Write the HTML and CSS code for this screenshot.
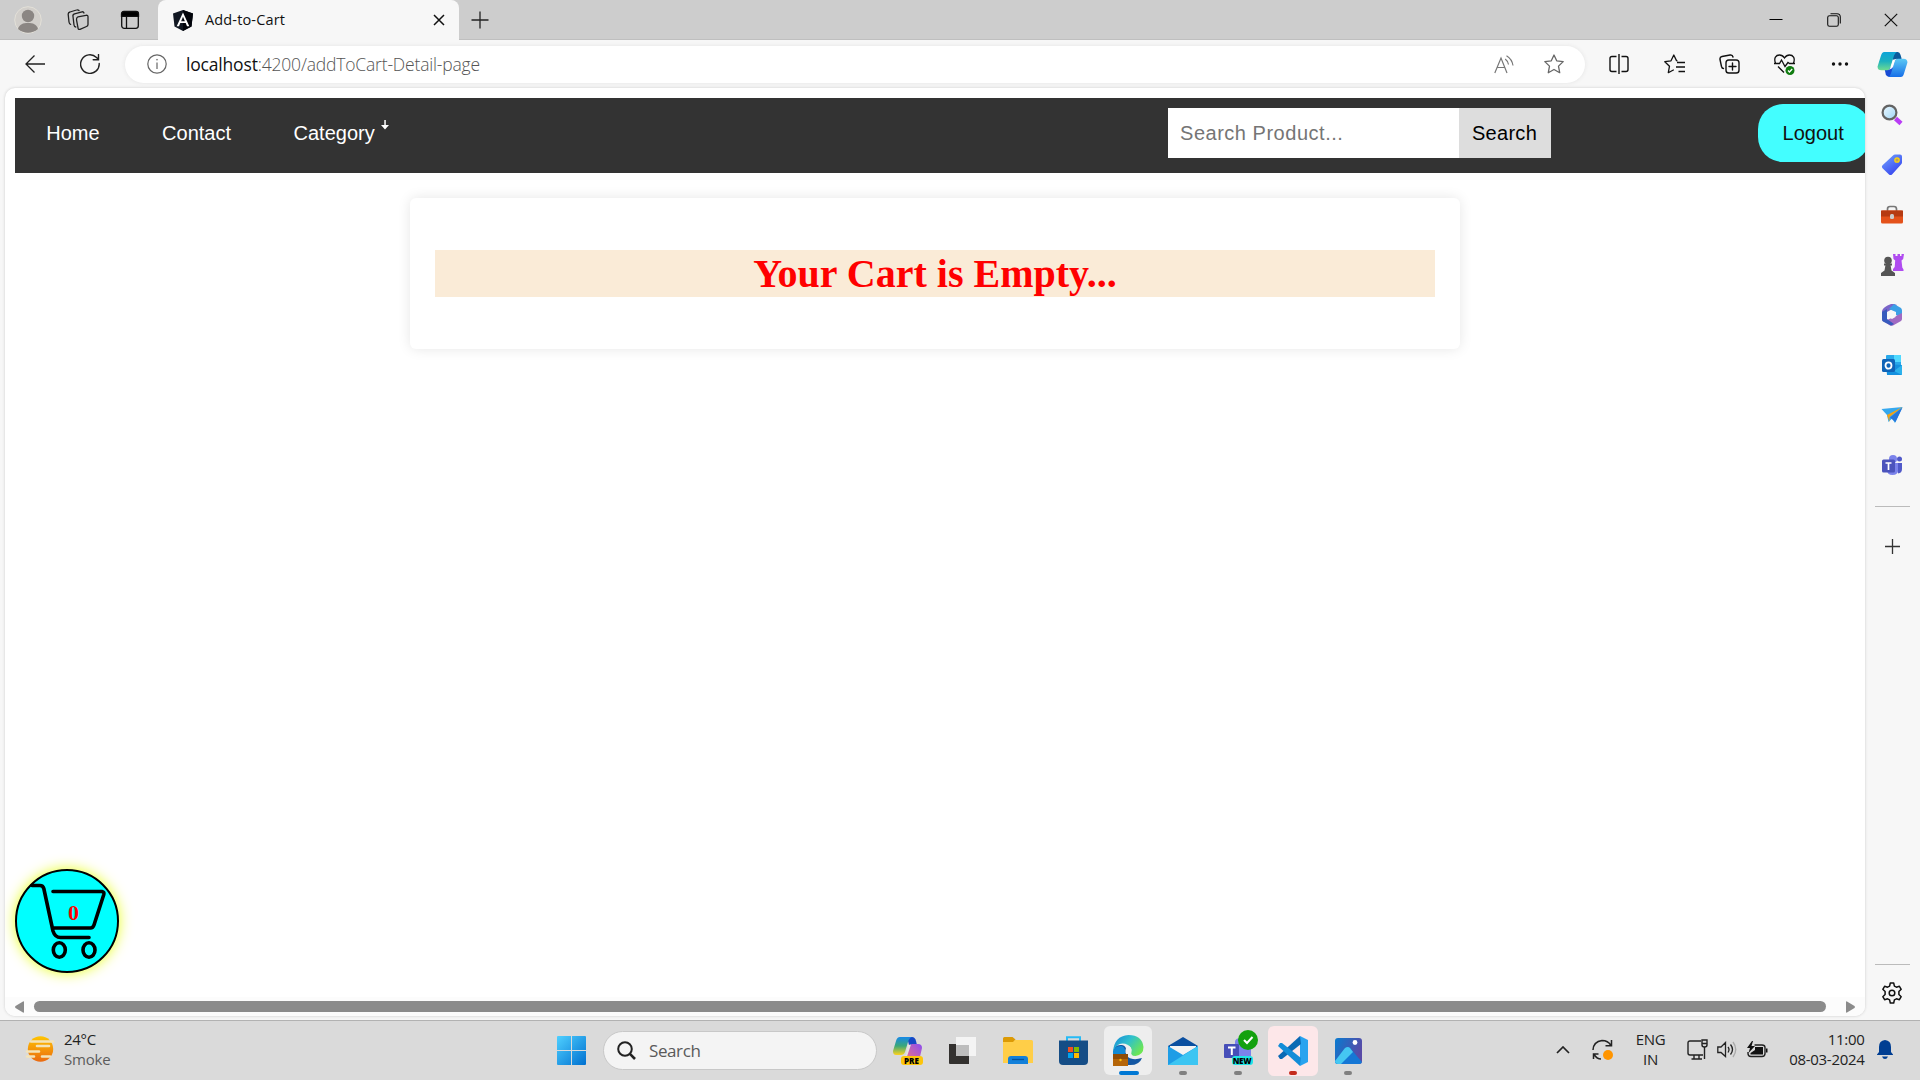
FILE: index.html
```html
<!DOCTYPE html>
<html lang="en">
<head>
<meta charset="utf-8">
<title>Add-to-Cart</title>
<link rel="stylesheet" href="styles.css">
</head>
<body>
<div class="screen">
  <header class="tabbar">
    <div class="slot w56">
      <svg width="28" height="28" viewBox="0 0 28 28"><circle cx="14" cy="14" r="13.3" fill="#d2cfcb" stroke="#e3e0d8" stroke-width="1"/><circle cx="14" cy="10" r="6.2" fill="#8b8683"/><path d="M4 23c1.500-5 5-6 10-6s8.500 1 10 6c-6 5-14 5-20 0z" fill="#8b8683"/></svg>
    </div>
    <div class="slot w44">
      <svg width="22" height="22" viewBox="0 0 22 22" fill="none" stroke="#222" stroke-width="1.300" stroke-linejoin="round" stroke-linecap="round"><path d="M11 7.800 19 6.300q2-.3 2 1.500v7.700q0 1.500-1.500 2L13 20.300q-2 .5-2-1.500l-1.500-8q-.3-2 1.500-3z"/><path d="M17 4q-.5-1.500-2-1.200L7.500 4.800Q5.500 5.500 6 7.500l1 8.500q.3 2 1.800 2"/><path d="M12 1.500Q11 .5 9.500 1L3 3Q1 3.500 1.200 5.500l.8 7.500q.3 2 1.600 2.300"/></svg>
    </div>
    <div class="slot w58 actions">
      <svg width="20" height="20" viewBox="0 0 20 20" fill="none" stroke="#111" stroke-width="1.300"><rect x="1.700" y="1.700" width="16.600" height="16.600" rx="2.500"/><path d="M6.500 6v12"/><path d="M1.500 6.300V4q0-2.500 2.500-2.500h12q2.500 0 2.500 2.500v2.300z" fill="#000"/></svg>
    </div>
    <div class="tab">
      <svg width="20" height="21" viewBox="0 0 20 21"><path d="M10 0 20 3.500 18.500 16.500 10 21 1.500 16.500 0 3.500z" fill="#111722"/><path d="M10 0 20 3.500 18.500 16.500 10 21z" fill="#02040b"/><path d="M10 2.500 3.700 16.200H6l1.300-3.100h5.400l1.300 3.100h2.300zm0 4.300 1.900 4.500H8.100z" fill="#fff"/></svg>
      <span class="tab-title">Add-to-Cart</span>
      <svg class="push" width="12" height="12" viewBox="0 0 12 12" stroke="#111" stroke-width="1.500"><path d="M1 1 11 11M11 1 1 11"/></svg>
    </div>
    <div class="slot w42">
      <svg width="18" height="18" viewBox="0 0 18 18" stroke="#222" stroke-width="1.300"><path d="M9 .5v17M.5 9h17"/></svg>
    </div>
    <div class="window-buttons">
      <svg width="14" height="14" viewBox="0 0 14 14" stroke="#000"><path d="M.5 6.500h13"/></svg>
      <svg width="14" height="14" viewBox="0 0 14 14" fill="none" stroke="#111" stroke-width="1.100"><rect x=".7" y="2.700" width="10.600" height="10.600" rx="1.800"/><path d="M3.500.7H10q3.300 0 3.300 3.300v6.500"/></svg>
      <svg width="14" height="14" viewBox="0 0 14 14" stroke="#111" stroke-width="1.200"><path d="M.8.8 13.200 13.200M13.200.8.8 13.200"/></svg>
    </div>
  </header>

  <div class="toolbar">
    <div class="slot back">
      <svg width="20" height="18" viewBox="0 0 20 18" fill="none" stroke="#222" stroke-width="1.300"><path d="M20 9H1M9.500.5 1 9l8.500 8.500"/></svg>
    </div>
    <div class="slot reload">
      <svg width="20" height="20" viewBox="0 0 20 20" fill="none" stroke="#222" stroke-width="1.400" stroke-linecap="round"><path d="M19.200 9.500A9.300 9.300 0 1 1 16.500 3.500l1.800 1.800M18.500.5v5.300h-5.300"/></svg>
    </div>
    <div class="address">
      <svg width="20" height="20" viewBox="0 0 20 20" fill="none" stroke="#666" stroke-width="1.200"><circle cx="10" cy="10" r="9.200"/><path d="M10 8.500v6.500"/><circle cx="10" cy="5.700" r=".5" fill="#666" stroke-width=".6"/></svg>
      <span class="url"><b>localhost</b>:4200/addToCart-Detail-page</span>
      <svg class="push" width="20" height="19" viewBox="0 0 20 19" fill="none" stroke="#777" stroke-width="1.200"><path d="M.8 18 7 3l6 15M3.300 12.500h7.500M11.200 4q2.700 2 3.300 5.500M12.500.7Q18 4 19 10.500"/></svg>
      <svg class="star" width="20" height="20" viewBox="0 0 20 20" fill="none" stroke="#666" stroke-width="1.300" stroke-linejoin="round"><path d="m10 1 2.700 5.800 6.500.8-4.700 4.500 1.200 6.600L10 15.500l-5.700 3.200 1.200-6.600L.8 7.600l6.500-.8z"/></svg>
    </div>
    <div class="tools">
      <svg width="20" height="20" viewBox="0 0 20 20" fill="none" stroke="#111" stroke-width="1.400"><path d="M10 0v20M7.500 2.500H3Q1 2.500 1 4.500v11q0 2 2 2h4.500M12.500 2.500H17q2 0 2 2v11q0 2-2 2h-4.500"/></svg>
      <svg width="21" height="20" viewBox="0 0 21 20" fill="none" stroke="#111" stroke-width="1.300" stroke-linejoin="round"><path d="M13.500 6.800 12.500 6.600 9.800 1 7 6.800l-6.200.9 4.700 4.500-1.200 6.500 5.500-3M13 8.500h8M12 13h9M14.500 17.500H21"/></svg>
      <svg width="21" height="20" viewBox="0 0 21 20" fill="none" stroke="#111" stroke-width="1.400" stroke-linecap="round"><rect x="7" y="6" width="13" height="13" rx="2.800"/><path d="M13.500 9v7M10 12.500h7M14 3Q13.500.6 11 1L3 2.500Q.6 3 1 5.500l1.500 7Q3 14.500 4.500 14.500"/></svg>
      <svg width="21" height="21" viewBox="0 0 21 21" fill="none" stroke="#111" stroke-width="1.300"><path d="M1.500 9C-.5 4 2 1 5.500 1 8 1 9.500 2.500 10.500 4 11.500 2.500 13 1 15.500 1 19 1 21.500 4 19.500 9M0 9.500h5.500L7.500 6l3.500 6.500L14 8.500l1.500 1H21M4 12.500l6 6"/><circle cx="16" cy="16.500" r="4.500" fill="#107c10" stroke="none"/><path d="m14 16.500 1.500 1.500 2.700-3" stroke="#fff"/></svg>
      <svg width="18" height="6" viewBox="0 0 18 6" fill="#111"><circle cx="2.500" cy="3" r="1.700"/><circle cx="9" cy="3" r="1.700"/><circle cx="15.500" cy="3" r="1.700"/></svg>
    </div>
    <div class="slot copilot">
      <svg width="31" height="27" viewBox="0 0 31 28"><defs><linearGradient id="cpA" x1="0" y1="0" x2="0" y2="1"><stop offset="0" stop-color="#0da4d8"/><stop offset=".5" stop-color="#1bb0c0"/><stop offset="1" stop-color="#6fdc91"/></linearGradient><linearGradient id="cpB" x1="0" y1="0" x2="0" y2="1"><stop offset="0" stop-color="#5cc9f5"/><stop offset="1" stop-color="#176fe8"/></linearGradient></defs><path d="M15 1h6q2 0 2.800 3l1.200 4-9 3z" fill="#0a5a9c"/><path d="M7 17h10l-2 10h-3q-2.500 0-3.500-3z" fill="#184bd4"/><path d="M7 1h13q-2 1-3 4l-4 13q-1 2-3 2H4q-4 0-4-4L3.500 5Q4.500 1 7 1z" fill="url(#cpA)"/><path d="M24 27H11q2-1 3-4l4-13q1-2 3-2h6q4 0 4 4l-3.500 11q-1 4-3.500 4z" fill="url(#cpB)"/><path d="m16 9 4-1q-2 1-3 4l-2 6-4 2q2-1 3-4z" fill="#fff"/></svg>
    </div>
  </div>

  <div class="workspace">
    <main class="page">
      <nav class="nav">
        <a>Home</a><a>Contact</a><a>Category <svg class="caret" width="8" height="10" viewBox="0 0 8 10"><path d="M3.300 0h1.500v5H8L4 9.500 0 5h3.300z" fill="#fff"/></svg></a>
        <form class="search"><div class="field">Search Product...</div><div class="submit">Search</div></form>
        <div class="logout">Logout</div>
      </nav>
      <section class="card"><h1>Your Cart is Empty...</h1></section>
      <div class="cart">
        <svg width="100" height="100" viewBox="0 0 100 100" fill="none" stroke="#000" stroke-width="3.600" stroke-linecap="round" stroke-linejoin="round"><path d="M15 14.500h8q3 0 3.800 3L36 60q2 6.500 7.500 6.500H72"/><path d="M36 20.500h49q2.500.5 1.800 3L77 54q-1 3-3.500 3H37"/><ellipse cx="42.300" cy="79" rx="6" ry="7.200"/><ellipse cx="72" cy="79" rx="6" ry="7.200"/></svg>
        <span class="count">0</span>
      </div>
      <div class="hscroll">
        <svg width="9" height="12" viewBox="0 0 9 12"><path d="M8 .5Q9 0 9 1v10q0 1-1 .5L.5 7Q-.3 6 .5 5z" fill="#8b8b8b"/></svg>
        <div class="thumb"></div>
        <svg width="9" height="12" viewBox="0 0 9 12"><path d="M1 .5Q0 0 0 1v10q0 1 1 .5L8.500 7q.8-1 0-2z" fill="#8b8b8b"/></svg>
      </div>
    </main>
    <aside class="sidebar">
      <div class="side-slot"><svg width="22" height="22" viewBox="0 0 22 22"><defs><linearGradient id="ln" x1="0" y1="0" x2="1" y2="1"><stop offset="0" stop-color="#edf8ff"/><stop offset="1" stop-color="#9dd5f5"/></linearGradient></defs><path d="m14.500 14.500 5.500 5" stroke="#b93df5" stroke-width="4.500"/><circle cx="8.500" cy="8.500" r="6.900" fill="url(#ln)" stroke="#636363" stroke-width="2.200"/></svg></div>
      <div class="side-slot"><svg width="22" height="22" viewBox="0 0 22 22"><defs><linearGradient id="tg" x1="0" y1="0" x2=".7" y2="1"><stop offset="0" stop-color="#74a7ff"/><stop offset="1" stop-color="#3542ee"/></linearGradient></defs><path d="M12 1.500Q13 .5 14 .5h5q2 0 2 2v6q0 1-1 2L11 20.500q-1.500 1.200-3 0L1.300 14q-1-1.500.2-2.700z" fill="url(#tg)"/><circle cx="16" cy="6" r="2.200" fill="#b9a160" stroke="#ffd50a" stroke-width="1.300"/></svg></div>
      <div class="side-slot"><svg width="24" height="20" viewBox="0 0 24 20"><path d="M7.500 6V4q0-2.500 2.500-2.500h4q2.500 0 2.500 2.500v2" fill="none" stroke="#777" stroke-width="1.700"/><rect x="1" y="5.500" width="22" height="13" rx="1.500" fill="#e4521b"/><path d="M1 5.500h22v6H1z" fill="#b63b12"/><rect x="10" y="9" width="4" height="5" rx="1.500" fill="#ccc"/></svg></div>
      <div class="side-slot"><svg width="24" height="24" viewBox="0 0 24 24"><path d="M13 1h2.500v2h2V1h2.500v2h1.500V1H24l-.8 5-1.700 1.500.8 7 1.200 2V18H13v-2l1.700-2 .5-6.500L13.500 6z" fill="#b04cf0"/><g fill="#555"><circle cx="8" cy="7.500" r="3.800"/><path d="M4 10.500h8v2H4z"/><path d="M5.500 12h5l1 5.500 3.500 2.500v3H1v-3l3.500-2.500z"/></g></svg></div>
      <div class="side-slot"><svg width="22" height="24" viewBox="0 0 22 24"><path d="M10 1Q2 4 1 8v8l5 3V9l7-4 3-3-3-1z" fill="#7a65c9"/><path d="m13 1 7 4q1 1 1 2.500V15l-6-3V9L8 6z" fill="#3ba0e6"/><path d="M21 10v6q0 1-1 2l-8 4.500q-1.500.5-3 0L2 18q-1.500-1-1-2l5 1 9-4z" fill="#a06ac3"/><path d="m1 9 5-3v10l7 5-3 1.500-8-4Q1 18 1 16z" fill="#385bbd"/><path d="m11 8.500 3.500 2v3.500L11 16l-3.500-2v-3.500z" fill="#f7f7f7"/></svg></div>
      <div class="side-slot"><svg width="22" height="22" viewBox="0 0 22 22"><rect x="5" y="1" width="15" height="14" rx="1" fill="#28a8ea"/><path d="M13 1h7v7h-7z" fill="#50d9ff"/><path d="M5 10 21 11v9q0 1-1 1H6z" fill="#1490df"/><path d="m21 11-8 6 8 4z" fill="#2cb2ec"/><rect x="1" y="5" width="13" height="13" rx="1.500" fill="#0f64b8"/><ellipse cx="7.500" cy="11.500" rx="3" ry="3.200" fill="none" stroke="#fff" stroke-width="1.800"/></svg></div>
      <div class="side-slot"><svg width="22" height="18" viewBox="0 0 22 18"><path d="M.5 3 21.500 1 14 17 11 12.500 7.500 16 6 9z" fill="#35a8ee"/><path d="m6 9 15.500-8L8.500 11v5z" fill="#f5a312"/><path d="m9 11.500 12.500-10L14.500 16z" fill="#2776dc"/></svg></div>
      <div class="side-slot"><svg width="22" height="22" viewBox="0 0 22 22"><circle cx="12" cy="5" r="4" fill="#7b83eb"/><circle cx="18.500" cy="5" r="2.500" fill="#5059c9"/><path d="M14 9h7v6q0 4-4 4.500z" fill="#5059c9"/><path d="M7 9h10v7q0 5-5.500 5T6 16z" fill="#7b83eb"/><rect x="1" y="5.500" width="13" height="13" rx="1.500" fill="#4b53bc"/><path d="M4.500 9h6M7.500 9v7" stroke="#fff" stroke-width="1.700"/></svg></div>
      <hr>
      <div class="side-slot"><svg width="15" height="15" viewBox="0 0 15 15" stroke="#333" stroke-width="1.300"><path d="M7.500 0v15M0 7.500h15"/></svg></div>
      <hr class="low">
      <div class="side-slot gear"><svg width="22" height="22" viewBox="0 0 22 22" fill="none" stroke="#111" stroke-width="1.500" stroke-linejoin="round"><path d="M9.300 1h3.400l.7 3.100 2 1.100 3-.9 1.800 3-2.300 2.200v3l2.300 2.200-1.800 3-3-.9-2 1.100-.7 3.100H9.300l-.7-3.100-2-1.100-3 .9-1.800-3 2.300-2.200v-3L1.800 7.300l1.800-3 3 .9 2-1.100z"/><circle cx="11" cy="11" r="2.800"/></svg></div>
    </aside>
  </div>

  <footer class="taskbar">
    <div class="weather">
      <svg width="30" height="28" viewBox="0 0 30 28"><defs><linearGradient id="sun" x1="0" y1="0" x2="0" y2="1"><stop offset="0" stop-color="#ffc400"/><stop offset="1" stop-color="#ea6a12"/></linearGradient></defs><circle cx="15.500" cy="14" r="12.700" fill="url(#sun)"/><g stroke="#f3e3b9" stroke-width="2.600" stroke-linecap="round"><path d="M6 6.500h22M12 11h12M2 16.500h12M9 21.500H2M17 21.500h8"/></g></svg>
      <div class="weather-text"><span>24°C</span><span class="dim">Smoke</span></div>
    </div>
    <div class="start">
      <svg width="29" height="29" viewBox="0 0 29 29"><defs><linearGradient id="win" gradientUnits="userSpaceOnUse" x1="0" y1="0" x2="29" y2="29"><stop offset="0" stop-color="#4fd0ff"/><stop offset="1" stop-color="#0070d0"/></linearGradient></defs><path d="M1 0h13v14H0V1q0-1 1-1zM15 0h13q1 0 1 1v13H15zM0 15h14v14H1q-1 0-1-1zM15 15h14v13q0 1-1 1H15z" fill="url(#win)"/></svg>
    </div>
    <div class="finder">
      <svg width="19" height="19" viewBox="0 0 19 19" fill="none" stroke="#222" stroke-width="2"><circle cx="8" cy="8" r="6.800"/><path d="m12.700 12.700 5.300 5.300" stroke-width="2.600"/></svg>
      <span>Search</span>
    </div>
    <div class="apps">
      <div class="app"><svg width="30" height="28" viewBox="0 0 30 28"><defs><linearGradient id="pa" x1="0" y1="0" x2="0" y2="1"><stop offset="0" stop-color="#1688e8"/><stop offset=".5" stop-color="#3ba878"/><stop offset="1" stop-color="#ffd21c"/></linearGradient><linearGradient id="pb" x1="1" y1="0" x2="0" y2="1"><stop offset="0" stop-color="#8d4df0"/><stop offset="1" stop-color="#ff7b70"/></linearGradient></defs><path d="M14 0h5q3 0 4 4l1 4h-8z" fill="#1648c6"/><path d="M7 0h12q-3 1-4 5l-3 10q-1 3-4 3H3q-3 0-3-4L3 4q1-4 4-4z" fill="url(#pa)"/><path d="M19 7h6q4 0 4 4l-3 13q-1 3-4 3H10q2-2 3-5l3-12q1-3 3-3z" fill="url(#pb)"/><path d="m15 8 3-.5-4 12h-3q2-1 2.500-4z" fill="#e6e2e2"/></svg><span class="pre">PRE</span></div>
      <div class="app"><svg width="32" height="28" viewBox="0 0 32 28"><path d="M2 7h20v20H3q-1 0-1-1z" fill="#33312f"/><path d="M9 0h20v19H9z" fill="#f4f4f4"/><path d="M9 8h13v11H9z" fill="#bdbdbd"/></svg></div>
      <div class="app"><svg width="30" height="27" viewBox="0 0 30 27"><path d="M0 1.500Q0 0 1.500 0h8l3 2.500L10 6H0z" fill="#dc9a05"/><path d="M10 5l2-2h16.500Q30 3 30 4.500V26H0V5z" fill="#ffce48"/><path d="M5 27v-5q0-3 3-3h14q3 0 3 3v5z" fill="#1380da"/><path d="M9 22.500h12" stroke="#06529c" stroke-width="1.300"/></svg></div>
      <div class="app"><svg width="29" height="29" viewBox="0 0 29 29"><path d="M8 5V1.200h13V5" fill="none" stroke="#27baf5" stroke-width="2"/><path d="M0 4.500h29V25q0 4-4 4H4q-4 0-4-4z" fill="#154d86"/><path d="M9 11h5v5H9z" fill="#f25022"/><path d="M15 11h5v5h-5z" fill="#7fba00"/><path d="M9 17h5v5H9z" fill="#00a4ef"/><path d="M15 17h5v5h-5z" fill="#ffb900"/></svg></div>
      <div class="app"><div class="tile"><svg width="31" height="31" viewBox="0 0 31 31"><defs><linearGradient id="ed" x1="0" y1="0" x2="1" y2=".6"><stop offset="0" stop-color="#1684d9"/><stop offset=".5" stop-color="#2ec0cd"/><stop offset="1" stop-color="#6de654"/></linearGradient></defs><path d="M0 17Q1 9 9 10q5 1 4 7 0 6 7 7 4 .5 9-1-3 8-14 7Q1 29 0 17z" fill="#1457a3"/><path d="M0 17Q1 1 15.500 0 29 0 30.500 12q0 8-8 9-6 0-4-4Q19 12 15 10 5 5 0 17z" fill="url(#ed)"/><path d="M0 17q2-7 9-6 4 2 3 7l-2 4H0z" fill="#128ad4"/><path d="M12.500 15q1-4 4-3.500 3 2 1.500 5.500 0 4 4 5-7 1-9.500-4z" fill="#eee"/><rect x="0" y="19" width="15" height="12" fill="#b56508"/><path d="M0 19h15v5H0z" fill="#8f4c06"/><circle cx="7.500" cy="25" r="1.200" fill="#ffc30b"/></svg></div><i class="mark active"></i></div>
      <div class="app"><svg width="30" height="28" viewBox="0 0 30 28"><path d="M0 9 15 0l15 9v6H0z" fill="#0a4fa0"/><path d="M2 9h26v9H2z" fill="#f3f3f3"/><path d="M0 9l15 9L30 9v19H0z" fill="#1e9de6"/><path d="M30 9 0 28h30z" fill="#3cc5f2"/></svg><i class="mark"></i></div>
      <div class="app teams"><svg width="34" height="38" viewBox="0 0 34 38"><path d="M11 13q0-4 6-4h10v18H11z" fill="#7b83eb"/><rect x="0" y="15" width="15" height="14" rx="1" fill="#464eb8"/><path d="M4 18.500h7.500M7.800 18.500V26" stroke="#fff" stroke-width="2"/><circle cx="24" cy="11" r="10" fill="#13a10e"/><path d="m20 11 3 3 5.500-6" fill="none" stroke="#fff" stroke-width="2"/></svg><span class="new">NEW</span><i class="mark"></i></div>
      <div class="app"><div class="tile alert"><svg width="30" height="30" viewBox="0 0 30 30"><path d="M22 0 30 4v22l-8 4z" fill="#29a3ef"/><path d="m22 0 1 8L4 23H2l-2-3z" fill="#0b69b4"/><path d="M2 7h2l19 15-1 8L0 10z" fill="#138dd8"/></svg></div><i class="mark red"></i></div>
      <div class="app"><svg width="27" height="26" viewBox="0 0 27 26"><defs><linearGradient id="ph" x1="0" y1="0" x2="1" y2=".4"><stop offset="0" stop-color="#087bd0"/><stop offset="1" stop-color="#594aa7"/></linearGradient><clipPath id="pc"><rect width="27" height="26" rx="3"/></clipPath></defs><g clip-path="url(#pc)"><path d="M0 0h27v26H0z" fill="url(#ph)"/><path d="M0 23 10 10q3-2 5 0l12 14v3H0z" fill="#1577d5"/><path d="M0 23 10 10q3-2 5 0l3 4L6 26H0z" fill="#45c7f2"/></g><circle cx="20" cy="4.500" r="2.400" fill="#fff"/></svg><i class="mark"></i></div>
    </div>
    <div class="tray">
      <svg class="chev" width="14" height="8" viewBox="0 0 14 8" fill="none" stroke="#222" stroke-width="1.700"><path d="m1 7 6-6 6 6"/></svg>
      <svg class="sync" width="22" height="22" viewBox="0 0 22 22" fill="none" stroke="#222" stroke-width="1.500"><path d="M1 11Q1.500 2.500 10 1.500q6 0 9 5M19.500 1v5.700h-6M9 20q-4 0-7-4.500M1.500 20v-5h5"/><circle cx="16" cy="16" r="5" fill="#ff9500" stroke="none"/></svg>
      <div class="lang"><span>ENG</span><span>IN</span></div>
      <svg class="net" width="21" height="21" viewBox="0 0 21 21" fill="none" stroke="#222" stroke-width="1.400"><path d="M14 2H3Q1 2 1 4v10q0 2 2 2h13M7 16v4M12 16v4M4.500 20H15M17.500 8v12"/><path d="M15 1h5v5q0 2-2.500 2T15 6zM15 4.500h5"/></svg>
      <svg class="vol" width="20" height="17" viewBox="0 0 20 17" fill="none" stroke="#222" stroke-width="1.300"><path d="M.8 6H4l4.500-4.500v14L4 11.500H.8zM11 6q2 2.500 0 5.500M13.500 3.500q4 5 0 10"/><path d="M16 1q5.500 7.500 0 15" stroke="#aaa"/></svg>
      <svg class="bat" width="21" height="17" viewBox="0 0 21 17" fill="none" stroke="#222" stroke-width="1.400"><path d="M7.500 4H15q3 0 3 2.500v6q0 3-3 3H4q-3 0-3-3V11"/><path d="M8 6h8v7.500H3.500V12L8 9zM19 7.500v4h1.500v-4z" fill="#111" stroke="none"/><path d="M5 0 0 7h3l-1.500 5L8 5H4.500L6 0z" fill="#111" stroke="none"/></svg>
      <div class="clock"><span>11:00</span><span>08-03-2024</span></div>
      <svg class="bell" width="16" height="19" viewBox="0 0 16 19" fill="#003e92"><path d="M2 12V7q0-6.500 6-7 6 .5 6 7v5l2 2.500V15H0v-.5zM5 16.500h6q-1 2.500-3 2.500t-3-2.500z"/></svg>
    </div>
  </footer>
</div>
</body>
</html>
```
FILE: styles.css
```css
* { box-sizing: border-box; }
body { margin: 0; background: #f7f7f7; font-family: "Open Sans", "Noto Sans", sans-serif; overflow: hidden; }
svg { display: block; flex: none; }
.screen { width: 1920px; height: 1080px; display: flex; flex-direction: column; }
.slot { display: flex; align-items: center; justify-content: center; flex: none; }
.push { margin-left: auto; }
.w56 { width: 56px; } .w44 { width: 44px; } .w58 { width: 58px; } .w42 { width: 42px; }
.actions { padding-left: 2px; }

.tabbar { height: 40px; display: flex; background: #cdcdcd; border-bottom: 1px solid #bfbfbf; flex: none; }
.tab { width: 301px; height: 40px; display: flex; align-items: center; padding: 0 14px 0 15px; gap: 12px; background: #f7f7f7; border-radius: 8px 8px 0 0; }
.tab-title { font-size: 14.5px; color: #111; white-space: nowrap; letter-spacing: 0.15px; padding-bottom: 2px; }
.window-buttons { margin-left: auto; display: grid; grid-template-columns: repeat(3, 57.5px); place-items: center; }

.toolbar { height: 48px; display: flex; align-items: center; background: #f7f7f7; flex: none; }
.back { width: 54px; margin-left: 8px; }
.reload { width: 56px; }
.address { width: 1460px; height: 37px; margin-left: 7px; border-radius: 19px; background: #fff; box-shadow: 0 0 4px #e4e4e4; display: flex; align-items: center; padding: 0 21px 0 22px; }
.url { margin-left: 19px; font-size: 17.500px; font-weight: 300; color: #555; white-space: nowrap; letter-spacing: -0.180px; padding-bottom: 1px; }
.url b { font-weight: 400; color: #111; }
.star { margin-left: 30px; }
.tools { margin-left: 6.500px; display: grid; grid-template-columns: repeat(5, 55.250px); place-items: center; }
.copilot { width: 50px; }

.workspace { height: 932px; display: flex; flex: none; padding-left: 5px; }
.page { position: relative; width: 1860px; height: 928px; background: #fff; border-radius: 10px; box-shadow: 0 0 3px #c9c9c9; overflow: hidden; display: flex; flex-direction: column; font-family: "Liberation Sans", Arial, sans-serif; padding-top: 10px; flex: none; }
.nav { height: 75px; margin-left: 10px; background: #333; display: flex; flex: none; font-size: 20px; color: #fff; }
.nav a { padding: 20px 31.250px 0; line-height: 31px; white-space: nowrap; }
.caret { display: inline-block; vertical-align: 10px; margin-left: 1px; }
.search { margin: 10px 0 0 747px; display: flex; height: 50px; line-height: 50px; }
.field { width: 291px; background: #fff; color: #757575; padding-left: 12.500px; font-size: 20px; letter-spacing: .52px; }
.submit { width: 92px; background: #ddd; color: #000; text-align: center; letter-spacing: .3px; }
.logout { margin: 6px 0 0 207px; width: 112px; height: 58px; flex: none; border-radius: 25px; background: #43feff; color: #111; line-height: 59px; padding-left: 25px; }
.card { width: 1050px; height: 151px; margin: 25px 0 0 405px; padding: 52px 25px; border-radius: 6px; box-shadow: 0 0 13px rgba(0,0,0,.1); flex: none; }
.card h1 { margin: 0; height: 47px; background: #faebd7; color: #f00; text-align: center; font: bold 40px/48px "Liberation Serif", "Times New Roman", serif; }
.cart { position: relative; width: 104px; height: 104px; margin: auto 0 24px 10px; border: 2px solid #000; border-radius: 50%; background: #0ff; box-shadow: 0 0 14px #e8ff20; flex: none; }
.count { position: absolute; left: 51px; top: 29px; font: bold 22px/26px "Liberation Serif", "Times New Roman", serif; color: #f00; }
.hscroll { height: 19px; padding: 0 10px; background: #fcfcfc; display: flex; align-items: center; flex: none; }
.thumb { width: 1792px; height: 11px; margin: 0 20px 0 10px; border-radius: 6px; background: #8b8b8b; flex: none; }

.sidebar { width: 54px; display: flex; flex-direction: column; align-items: center; padding: 2px 0 0; }
.side-slot { height: 50px; display: flex; align-items: center; flex: none; }
.sidebar hr { width: 35px; height: 1px; margin: 16px 0 14px; border: 0; background: #bbb; flex: none; }
.sidebar hr.low { margin: auto 0 3px; }
.gear { margin-bottom: 2px; }

.taskbar { height: 60px; background: #dadada; border-top: 1px solid #b2b2b2; display: flex; align-items: center; flex: none; color: #222; }
.weather { width: 557px; padding-left: 25px; display: flex; align-items: center; gap: 9px; padding-bottom: 3px; }
.weather-text, .lang, .clock { display: flex; flex-direction: column; font-size: 15px; line-height: 20px; letter-spacing: -0.3px; padding-bottom: 1px; }
.dim { color: #5c5c5c; letter-spacing: -.2px; }
.start { width: 29px; }
.finder { width: 274px; height: 39px; margin-left: 17px; border: 1px solid #c8c8c8; border-radius: 20px; background: #f4f4f4; display: flex; align-items: center; padding-left: 13px; gap: 13px; font-size: 17px; color: #5a5a5a; letter-spacing: -0.4px; }
.apps { display: grid; grid-template-columns: repeat(9, 55px); margin-left: 3.500px; }
.app { position: relative; height: 59px; display: flex; align-items: center; justify-content: center; }
.teams { padding: 0 0 5px 5px; }
.tile { width: 48px; height: 49px; border-radius: 6px; background: #eee; display: flex; align-items: center; justify-content: center; }
.tile.alert { width: 50px; height: 50px; background: #fde7e9; }
.mark { position: absolute; left: 23px; bottom: 5px; width: 8px; height: 4px; border-radius: 2px; background: #808080; }
.mark.active { left: 18px; width: 20px; background: #0078d4; }
.mark.red { background: #c42b1c; }
.pre, .new { position: absolute; font: 800 8px/9px "Open Sans", sans-serif; color: #000; border-radius: 3px; text-align: center; }
.pre { left: 20px; bottom: 15px; width: 22px; background: #fdc50b; }
.new { left: 21px; bottom: 15px; width: 21px; background: #20e5e5; letter-spacing: -.3px; }
.tray { display: flex; align-items: center; flex: 1; padding-bottom: 2px; }
.chev { margin-left: 180px; }
.sync { margin-left: 22px; }
.lang { width: 40px; margin-left: 17px; align-items: center; }
.net { margin-left: 16px; }
.vol { margin-left: 9px; }
.bat { margin-left: 10px; }
.clock { width: 97px; align-items: flex-end; white-space: nowrap; }
.bell { margin-left: 12px; }
```
